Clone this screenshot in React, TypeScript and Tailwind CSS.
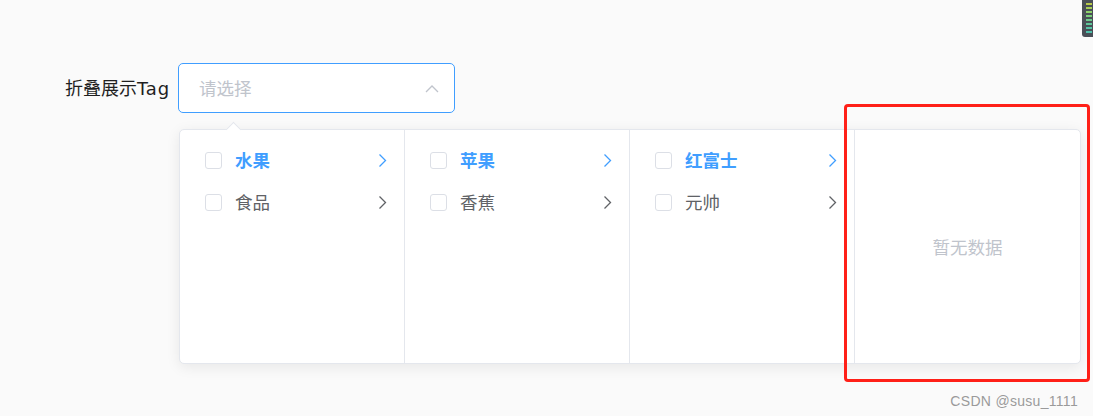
import React from "react"

type Item = { label: string; active?: boolean }

const COLUMNS: Item[][] = [
    [{ label: "水果", active: true }, { label: "食品" }],
    [{ label: "苹果", active: true }, { label: "香蕉" }],
    [{ label: "红富士", active: true }, { label: "元帅" }],
]

const FONT = "font-['Microsoft_YaHei','Noto_Sans_CJK_SC',sans-serif]"

const ChevronRight = ({ active }: { active?: boolean }) => (
    <svg width="9" height="15" viewBox="0 0 9 15" fill="none">
        <path
            d="M1.5 1.5 L7.5 7.5 L1.5 13.5"
            stroke={active ? "#409eff" : "#606266"}
            strokeWidth="1.3"
        />
    </svg>
)

const Checkbox = () => (
    <span className="inline-block w-[17px] h-[17px] border border-[#dcdfe6] rounded-[3px] bg-white shrink-0" />
)

const MenuColumn = ({ items, last }: { items: Item[]; last?: boolean }) => (
    <ul className={`w-[225px] h-full pt-[9px] ${last ? "" : "border-r border-[#e4e7ed]"}`}>
        {items.map((item) => (
            <li key={item.label} className="h-[42px] flex items-center pl-[25px] pr-[17px]">
                <Checkbox />
                <span
                    className={`ml-[13px] flex-1 text-[17.5px] leading-none ${
                        item.active ? "text-[#409eff] font-bold" : "text-[#606266]"
                    }`}
                >
                    {item.label}
                </span>
                <ChevronRight active={item.active} />
            </li>
        ))}
    </ul>
)

export default function App() {
    return (
        <div className={`relative w-[1093px] h-[416px] bg-[#fafafa] overflow-hidden ${FONT}`}>
            <div className="flex flex-col pt-[63px] pl-[65px]">
                {/* Label + select */}
                <div className="flex items-center">
                    <span className="w-[113px] text-[18px] leading-none text-[#1f1f1f] whitespace-nowrap">
                        折叠展示<span className="font-['DejaVu_Sans',sans-serif] tracking-[0.8px]">Tag</span>
                    </span>
                    <div className="w-[277px] h-[50px] border border-[#409eff] rounded-[5px] bg-white flex items-center pl-[20px] pr-[15px]">
                        <span className="flex-1 text-[17.5px] text-[#c0c4cc] leading-none">请选择</span>
                        <svg width="14" height="9" viewBox="0 0 14 9" fill="none">
                            <path d="M1 8 L7 2 L13 8" stroke="#c0c4cc" strokeWidth="1.3" />
                        </svg>
                    </div>
                </div>

                {/* Dropdown panel */}
                <div className="relative ml-[114px] mt-[16px] w-[902px] h-[235px] bg-white border border-[#e4e7ed] rounded-[5px] shadow-[0_3px_14px_rgba(0,0,0,0.08)] flex">
                    <span className="absolute -top-[6px] left-[48px] w-[11px] h-[11px] bg-white border-l border-t border-[#e4e7ed] rotate-45" />
                    {COLUMNS.map((col, i) => (
                        <MenuColumn key={i} items={col} />
                    ))}
                    <div className="w-[225px] h-full flex items-center justify-center">
                        <span className="text-[17.5px] text-[#c0c4cc] leading-none">暂无数据</span>
                    </div>
                </div>
            </div>

            {/* annotation box */}
            <div className="absolute left-[844px] top-[104px] w-[246px] h-[278px] border-[3px] border-[#ff2018] rounded-[4px]" />

            {/* top-right widget */}
            <div className="absolute right-0 top-0 w-[11px] h-[37px] bg-[#4a4f57] rounded-bl-[3px] flex flex-col items-end gap-[2px] pt-[3px] pr-[1px]">
                <span className="w-[6px] h-[2px] bg-[#b8c94a]" />
                <span className="w-[6px] h-[2px] bg-[#a6cf55]" />
                <span className="w-[6px] h-[2px] bg-[#8fd16a]" />
                <span className="w-[6px] h-[2px] bg-[#7ccf7c]" />
                <span className="w-[6px] h-[2px] bg-[#6ccb8c]" />
                <span className="w-[6px] h-[2px] bg-[#5fc79a]" />
                <span className="w-[6px] h-[2px] bg-[#55c4a4]" />
                <span className="w-[6px] h-[2px] bg-[#4fc0aa]" />
            </div>

            {/* watermark */}
            <span className="absolute right-[15px] top-[391px] text-[14px] text-[#9a9a9a] font-['Liberation_Sans',sans-serif] tracking-[0.3px]">
                CSDN @susu_1111
            </span>
        </div>
    )
}
